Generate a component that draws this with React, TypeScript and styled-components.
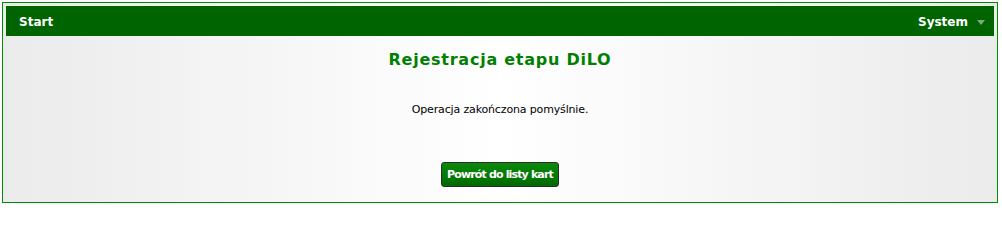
import React from "react";
import styled, { createGlobalStyle } from "styled-components";

const Global = createGlobalStyle`
  html, body { margin: 0; padding: 0; background: #ffffff; }
  body { font-family: "DejaVu Sans", Verdana, sans-serif; }
`;

const Frame = styled.div`
  margin: 2px 4px 2px 2px;
  height: 201px;
  box-sizing: border-box;
  border: 1px solid #008a00;
  padding: 3px;
  display: flex;
  flex-direction: column;
  background: linear-gradient(to right, #ebebeb 0%, #ffffff 50%, #ebebeb 100%);
`;

const Bar = styled.div`
  height: 30px;
  background: #006400;
  display: flex;
  align-items: center;
  justify-content: space-between;
  padding: 1px 9px 0 13px;
  box-sizing: border-box;
  color: #ffffff;
  font-weight: bold;
  font-size: 12px;
`;

const Menu = styled.div`
  display: flex;
  align-items: center;
  gap: 9px;
`;

const Caret = styled.span`
  width: 0;
  height: 0;
  border-left: 4px solid transparent;
  border-right: 4px solid transparent;
  border-top: 5px solid #7fa87f;
  margin-top: 1px;
`;

const Body = styled.div`
  flex: 1;
  display: flex;
  flex-direction: column;
  align-items: center;
`;

const Title = styled.h1`
  margin: 14px 0 0;
  color: #008000;
  font-size: 16px;
  font-weight: bold;
  letter-spacing: 0.75px;
`;

const Message = styled.p`
  margin: 34px 0 0;
  font-size: 11px;
  letter-spacing: -0.15px;
  color: #000000;
`;

const Button = styled.button`
  margin-top: 46px;
  height: 25px;
  padding: 0 5px;
  border: 1px solid #2b2b2b;
  border-radius: 3px;
  background: linear-gradient(to bottom, #0a8a0a 0%, #006a00 100%);
  color: #ffffff;
  font-family: "DejaVu Sans", Verdana, sans-serif;
  font-weight: bold;
  font-size: 11px;
  letter-spacing: -0.85px;
  cursor: pointer;
`;

export default function App() {
  return (
    <>
      <Global />
      <Frame>
        <Bar>
          <span>Start</span>
          <Menu>
            <span>System</span>
            <Caret />
          </Menu>
        </Bar>
        <Body>
          <Title>Rejestracja etapu DiLO</Title>
          <Message>Operacja zakończona pomyślnie.</Message>
          <Button>Powrót do listy kart</Button>
        </Body>
      </Frame>
    </>
  );
}
